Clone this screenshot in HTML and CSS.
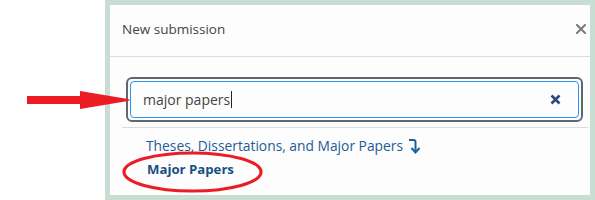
FILE: index.html
```html
<!DOCTYPE html>
<html lang="en">
<head>
    <meta charset="UTF-8">
    <title>New submission</title>
    <link rel="stylesheet" href="styles.css">
</head>
<body>
    <div class="page">
        <div class="gutter"></div>
        <div class="frame">
            <div class="panel">
                <div class="panel-header">
                    <span class="title">New submission</span>
                    <svg class="close" width="10" height="10" viewBox="0 0 10 10">
                        <path d="M1 1 L9 9 M9 1 L1 9" stroke="#7a7a7a" stroke-width="2" stroke-linecap="square"/>
                    </svg>
                </div>

                <div class="search-ring">
                    <div class="search-box">
                        <span class="query">major papers</span><span class="caret"></span>
                        <svg class="clear" width="11" height="11" viewBox="0 0 11 11">
                            <path d="M1.5 1.5 L9.5 9.5 M9.5 1.5 L1.5 9.5" stroke="#2b4a7c" stroke-width="2.6" stroke-linecap="butt"/>
                        </svg>
                    </div>
                </div>

                <div class="results">
                    <div class="result-parent">
                        Theses, Dissertations, and Major Papers
                        <svg class="drill" width="13" height="16" viewBox="0 0 13 16">
                            <path d="M1 2 H5.5 Q7.5 2 7.5 4 V14" fill="none" stroke="#1a5fa0" stroke-width="2"/>
                            <path d="M3.5 10 L7.5 14.5 L11.5 10" fill="none" stroke="#1a5fa0" stroke-width="2"/>
                        </svg>
                    </div>
                    <div class="result-child">Major Papers</div>
                </div>
            </div>
        </div>

        <svg class="annotations" width="595" height="200" viewBox="0 0 595 200">
            <rect x="27" y="96" width="55" height="8" fill="#ec1c24"/>
            <path d="M80 91 L80 109 L128 101 L130 100 L128 99 Z" fill="#ec1c24"/>
            <ellipse cx="192.5" cy="172" rx="68.5" ry="19" fill="none" stroke="#ec1c24" stroke-width="3.2"/>
        </svg>
    </div>
</body>
</html>
```

FILE: styles.css
```css
* {
    margin: 0;
    padding: 0;
    box-sizing: border-box;
}

body {
    background: #fff;
    font-family: "Open Sans", "Noto Sans", sans-serif;
}

.page {
    position: relative;
    display: flex;
    width: 595px;
    height: 200px;
}

.gutter {
    width: 105px;
    flex: none;
}

.frame {
    flex: 1;
    border: 5px solid #c9ddd2;
    background: #fdfdfd;
}

.panel {
    height: 100%;
    background: #fdfdfd;
}

.panel-header {
    display: flex;
    align-items: center;
    justify-content: space-between;
    height: 52px;
    padding: 0 4px 3px 12px;
    border-bottom: 1px solid #dcdcdc;
}

.title {
    font-size: 13.5px;
    color: #444;
}

.search-ring {
    margin: 20px 7px 0 16px;
    height: 45px;
    border: 2px solid #5f6870;
    border-radius: 6px;
    padding: 2px;
}

.search-box {
    display: flex;
    align-items: center;
    height: 100%;
    border: 1px solid #2196f3;
    border-radius: 4px;
    padding: 0 17px 0 12px;
}

.query {
    font-size: 14px;
    color: #444;
}

.caret {
    width: 1px;
    height: 17px;
    background: #222;
    margin-left: 1px;
}

.clear {
    margin-left: auto;
}

.results {
    margin: 5px 2px 0 12px;
    border-top: 1px solid #dcdcdc;
    padding: 6px 0 0 24px;
}

.result-parent {
    display: flex;
    align-items: center;
    gap: 5px;
    height: 23px;
    font-size: 13.8px;
    color: #1f5b96;
}

.result-child {
    height: 24px;
    line-height: 24px;
    font-size: 13.2px;
    font-weight: bold;
    color: #1a4f82;
    padding-left: 1px;
}

.annotations {
    position: absolute;
    left: 0;
    top: 0;
    pointer-events: none;
}
```
